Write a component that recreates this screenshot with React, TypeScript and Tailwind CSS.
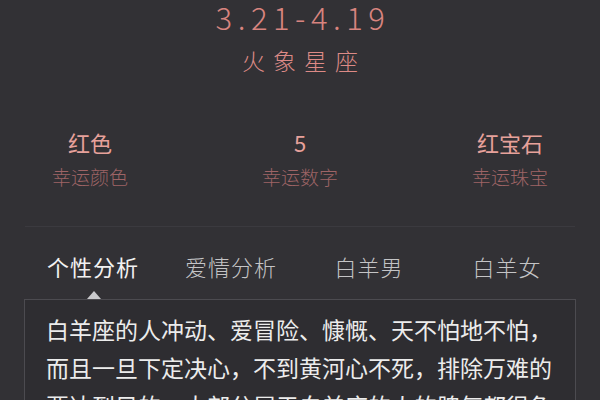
const font = { fontFamily: '"Noto Sans CJK SC", "Noto Sans", sans-serif' };

const lucky = [
  { value: "红色", label: "幸运颜色" },
  { value: "5", label: "幸运数字" },
  { value: "红宝石", label: "幸运珠宝" },
];

const tabs = ["个性分析", "爱情分析", "白羊男", "白羊女"];

export default function App() {
  return (
    <div
      className="h-[400px] w-[600px] overflow-hidden bg-[#323135] font-['Noto_Sans_CJK_SC',sans-serif]"
      style={font}
    >
      {/* header */}
      <div className="flex flex-col items-center">
        <p className="pl-[6px] text-[31px] font-light leading-[34px] tracking-[5.5px] text-[#d8847f]">
          3.21-4.19
        </p>
        <p className="mt-[9px] pl-[8px] text-[23px] font-light leading-[34px] tracking-[8px] text-[#dd8a86]">
          火象星座
        </p>
      </div>

      {/* lucky items */}
      <div className="mt-[51px] flex justify-between px-[30px]">
        {lucky.map((item) => (
          <div key={item.label} className="flex w-[120px] flex-col items-center">
            <span className="text-[22px] leading-[28px] text-[#e7a19b]">{item.value}</span>
            <span className="mt-[8px] text-[19px] font-light leading-[26px] text-[#9e6466]">{item.label}</span>
          </div>
        ))}
      </div>

      <div className="mx-[25px] mt-[36px] h-px bg-[#3b3a3f]" />

      {/* tabs */}
      <div className="mx-[24px] mt-[24px] grid grid-cols-4">
        {tabs.map((t, i) => (
          <div key={t} className="flex justify-center">
            <span
              className={
                i === 0
                  ? "text-[22px] leading-[30px] tracking-[1px] text-[#f2f2f2]"
                  : "text-[22px] font-light leading-[30px] tracking-[1px] text-[#c4c4c6]"
              }
            >
              {t}
            </span>
          </div>
        ))}
      </div>

      {/* content box */}
      <div className="relative mx-[24px] mt-[18px] border border-[#4c4b50] bg-[#2e2d31] px-[21px] pt-[10px]">
        <span className="absolute left-[62px] top-[-9px] h-0 w-0 border-x-[7px] border-b-[8px] border-x-transparent border-b-[#c9c9cc]" />
        <p className="text-[23px] leading-[38px] text-[#ececec]">
          白羊座的人冲动、爱冒险、慷慨、天不怕地不怕，而且一旦下定决心，不到黄河心不死，排除万难的要达到目的。大部分属于白羊座的人的脾气都很急躁，但是也很容易就会消气。
        </p>
      </div>
    </div>
  );
}
